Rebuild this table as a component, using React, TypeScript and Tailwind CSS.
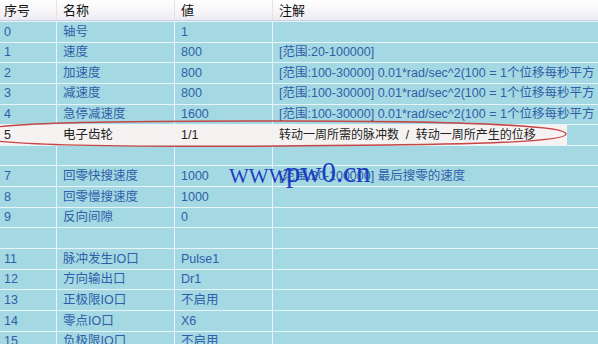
type Row = [string, string, string, string]

const ACC = '[范围:100-30000] 0.01*rad/sec^2(100 = 1个位移每秒平方'

const rows: Row[] = [
  ['0', '轴号', '1', ''],
  ['1', '速度', '800', '[范围:20-100000]'],
  ['2', '加速度', '800', ACC],
  ['3', '减速度', '800', ACC],
  ['4', '急停减速度', '1600', ACC],
  ['5', '电子齿轮', '1/1', '转动一周所需的脉冲数  /  转动一周所产生的位移'],
  ['', '', '', ''],
  ['7', '回零快搜速度', '1000', '[范围:20-100000] 最后搜零的速度'],
  ['8', '回零慢搜速度', '1000', ''],
  ['9', '反向间隙', '0', ''],
  ['', '', '', ''],
  ['11', '脉冲发生IO口', 'Pulse1', ''],
  ['12', '方向输出口', 'Dr1', ''],
  ['13', '正极限IO口', '不启用', ''],
  ['14', '零点IO口', 'X6', ''],
  ['15', '负极限IO口', '不启用', ''],
]

const cell = 'flex items-center overflow-hidden whitespace-pre border-r border-[#e6f5f8]'

const TableRow = ({ row }: { row: Row }) => {
  const picked = row[0] === '5'
  const bg = picked ? 'bg-[#f5f2f1] text-[#222]' : 'text-[#2f5fa9]'
  return (
    <div className="flex h-[20.65px] shrink-0 border-t border-[#e6f5f8]">
      <div className={`${cell} ${bg} w-[57px] pl-1`}>{row[0]}</div>
      <div className={`${cell} ${bg} w-[118px] pl-[6px]`}>{row[1]}</div>
      <div className={`${cell} ${bg} w-[98px] pl-[6px]`}>{row[2]}</div>
      <div className="flex flex-1 overflow-hidden">
        <div
          className={`flex items-center overflow-hidden whitespace-pre pl-[6px] ${
            picked ? 'w-[294px] bg-[#f5f2f1] text-[#222] text-[12px]' : 'flex-1 text-[#2f5fa9]'
          }`}
        >
          {row[3]}
        </div>
      </div>
    </div>
  )
}

export default function App() {
  return (
    <div className="relative w-[598px] h-[344px] overflow-hidden bg-[#a4d8e2] text-[12.5px] leading-none font-['Liberation_Sans','Noto_Sans_CJK_SC',sans-serif]">
      <div className="flex h-[21px] border-b border-[#c8cde6] bg-gradient-to-b from-white to-[#efecf1] text-[#111] text-[13px]">
        <div className="flex items-center w-[57px] pl-1 border-r border-[#e4e4e8]">序号</div>
        <div className="flex items-center w-[118px] pl-[6px] border-r border-[#e4e4e8]">名称</div>
        <div className="flex items-center w-[98px] pl-[6px] border-r border-[#e4e4e8]">値</div>
        <div className="flex items-center flex-1 pl-[6px]">注解</div>
      </div>
      <div className="flex flex-col">
        {rows.map((r, i) => (
          <TableRow key={i} row={r} />
        ))}
      </div>

      {/* red hand-drawn ring around row 5 */}
      <svg className="absolute left-0 top-0 pointer-events-none" width="598" height="344">
        <path
          d="M 566 134 C 566 124, 420 121, 280 121 C 120 121, -30 122, -30 134 C -30 146, 120 147, 280 146 C 420 145, 566 144, 566 134 Z"
          fill="none"
          stroke="#c64545"
          strokeWidth="1.5"
        />
      </svg>

      <div className="absolute left-[229px] top-[166px] text-[21px] leading-none text-[#1c3cc4] font-['Liberation_Serif',serif]">
        WWW.
      </div>
      <div className="absolute left-[286px] top-[158px] text-[29px] leading-none text-[#1c3cc4] font-['Liberation_Serif',serif]">
        pw0.cn
      </div>
    </div>
  )
}
